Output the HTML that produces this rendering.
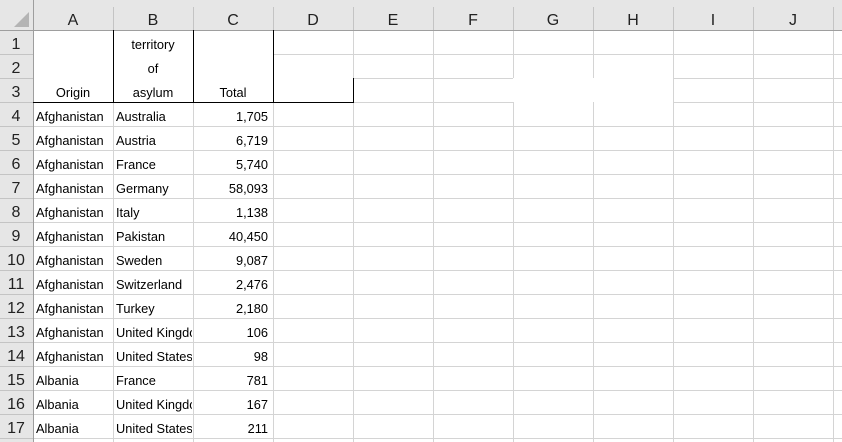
<!DOCTYPE html>
<html><head><meta charset="utf-8"><style>
html,body{margin:0;padding:0;background:#fff;width:842px;height:442px;overflow:hidden}
svg{display:block}
.h{font-family:"Liberation Sans",sans-serif;font-size:16px;fill:#222}
.c{font-family:"Liberation Sans",sans-serif;font-size:12.8px;fill:#000}
</style></head><body>
<svg width="842" height="442" viewBox="0 0 842 442" xmlns="http://www.w3.org/2000/svg">
<defs><clipPath id="cb"><rect x="113" y="0" width="79" height="442"/></clipPath></defs>
<rect x="0" y="0" width="842" height="30" fill="#e6e6e6"/>
<rect x="0" y="0" width="33" height="442" fill="#e6e6e6"/>
<polygon points="14,27 29,27 29,12" fill="#b4b4b4"/>
<g stroke="#d4d4d4" stroke-width="1">
<path d="M273 54.5H842M353 78.5H513M673 78.5H842M353 102.5H513M673 102.5H842
M33 126.5H842M33 150.5H842M33 174.5H842M33 198.5H842M33 222.5H842M33 246.5H842M33 270.5H842M33 294.5H842M33 318.5H842M33 342.5H842M33 366.5H842M33 390.5H842M33 414.5H842M33 438.5H842"/>
<path d="M113.5 102V442M193.5 102V442M273.5 102V442M353.5 30V78M353.5 102V442M433.5 30V442M513.5 30V78M513.5 102V442M593.5 30V78M593.5 102V442M673.5 30V442M753.5 30V442M833.5 30V442"/>
</g>
<g stroke="#c4c4c4">
<path d="M113.5 7V30M193.5 7V30M273.5 7V30M353.5 7V30M433.5 7V30M513.5 7V30M593.5 7V30M673.5 7V30M753.5 7V30M833.5 7V30"/>
<path d="M0 54.5H33M0 78.5H33M0 102.5H33M0 126.5H33M0 150.5H33M0 174.5H33M0 198.5H33M0 222.5H33M0 246.5H33M0 270.5H33M0 294.5H33M0 318.5H33M0 342.5H33M0 366.5H33M0 390.5H33M0 414.5H33M0 438.5H33"/>
</g>
<path d="M0 30.5H842M33.5 0V442" stroke="#9e9e9e"/>
<g stroke="#000" stroke-width="1" fill="none">
<path d="M33 102.5H353.5V78M113.5 30V102M193.5 30V102M273.5 30V102"/>
</g>
<g class="h" text-anchor="middle">
<text x="73" y="25">A</text><text x="153" y="25">B</text><text x="233" y="25">C</text><text x="313" y="25">D</text><text x="393" y="25">E</text><text x="473" y="25">F</text><text x="553" y="25">G</text><text x="633" y="25">H</text><text x="713" y="25">I</text><text x="793" y="25">J</text>
</g>
<g class="h" text-anchor="middle">
<text x="16" y="49">1</text><text x="16" y="73">2</text><text x="16" y="97">3</text><text x="16" y="121">4</text><text x="16" y="145">5</text><text x="16" y="169">6</text><text x="16" y="193">7</text><text x="16" y="217">8</text><text x="16" y="241">9</text><text x="16" y="265">10</text><text x="16" y="289">11</text><text x="16" y="313">12</text><text x="16" y="337">13</text><text x="16" y="361">14</text><text x="16" y="385">15</text><text x="16" y="409">16</text><text x="16" y="433">17</text>
</g>
<g class="c" text-anchor="middle">
<text x="153" y="49">territory</text><text x="153" y="73">of</text><text x="153" y="97">asylum</text>
<text x="73" y="97">Origin</text><text x="233" y="97">Total</text>
</g>
<g class="c">
<text x="36" y="121">Afghanistan</text><text x="36" y="145">Afghanistan</text><text x="36" y="169">Afghanistan</text><text x="36" y="193">Afghanistan</text><text x="36" y="217">Afghanistan</text><text x="36" y="241">Afghanistan</text><text x="36" y="265">Afghanistan</text><text x="36" y="289">Afghanistan</text><text x="36" y="313">Afghanistan</text><text x="36" y="337">Afghanistan</text><text x="36" y="361">Afghanistan</text><text x="36" y="385">Albania</text><text x="36" y="409">Albania</text><text x="36" y="433">Albania</text>
</g>
<g class="c" clip-path="url(#cb)">
<text x="116" y="121">Australia</text><text x="116" y="145">Austria</text><text x="116" y="169">France</text><text x="116" y="193">Germany</text><text x="116" y="217">Italy</text><text x="116" y="241">Pakistan</text><text x="116" y="265">Sweden</text><text x="116" y="289">Switzerland</text><text x="116" y="313">Turkey</text><text x="116" y="337">United Kingdom</text><text x="116" y="361">United States</text><text x="116" y="385">France</text><text x="116" y="409">United Kingdom</text><text x="116" y="433">United States</text>
</g>
<g class="c" text-anchor="end">
<text x="268" y="121">1,705</text><text x="268" y="145">6,719</text><text x="268" y="169">5,740</text><text x="268" y="193">58,093</text><text x="268" y="217">1,138</text><text x="268" y="241">40,450</text><text x="268" y="265">9,087</text><text x="268" y="289">2,476</text><text x="268" y="313">2,180</text><text x="268" y="337">106</text><text x="268" y="361">98</text><text x="268" y="385">781</text><text x="268" y="409">167</text><text x="268" y="433">211</text>
</g>
</svg>
</body></html>
